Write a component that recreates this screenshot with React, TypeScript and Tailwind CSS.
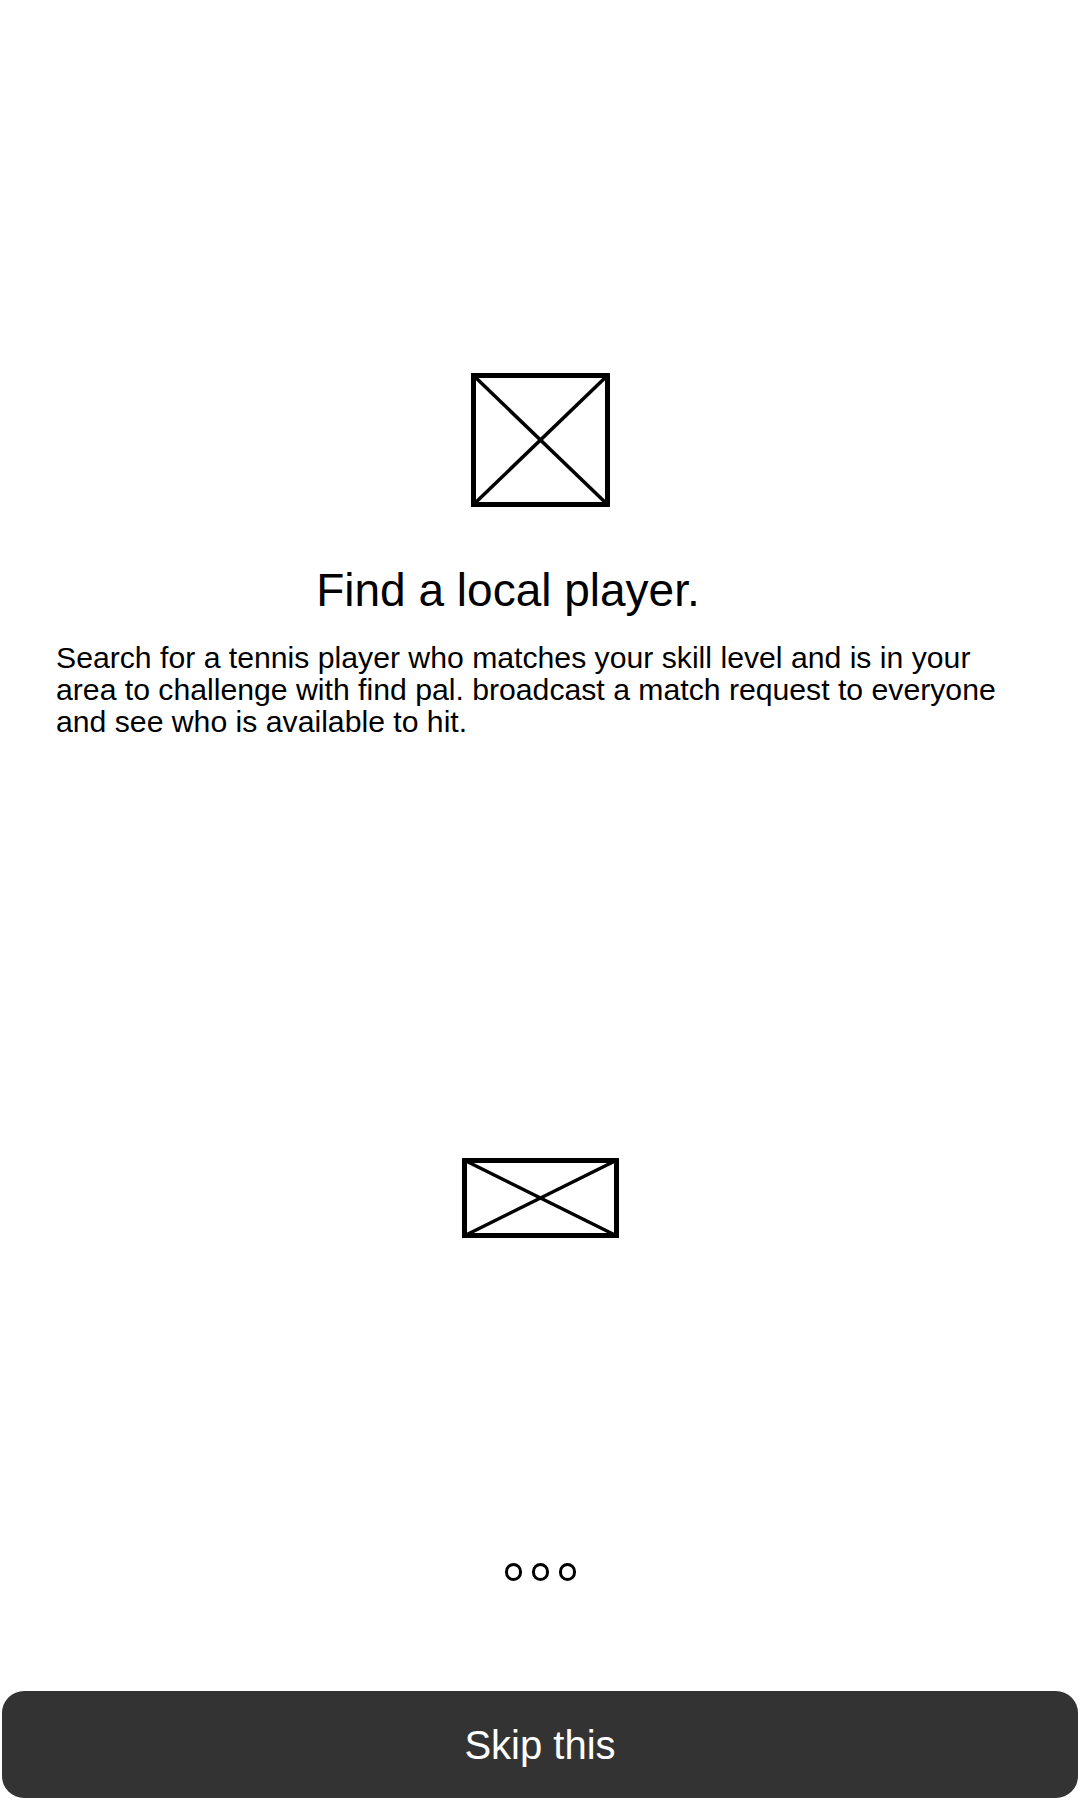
import React from "react";

function Placeholder({ w, h }: { w: number; h: number }) {
  // image placeholder: box with a cross
  return (
    <svg width={w} height={h} viewBox={`0 0 ${w} ${h}`} className="block">
      <rect x={2.5} y={2.5} width={w - 5} height={h - 5} fill="none" stroke="#000" strokeWidth={5} />
      <line x1={2} y1={2} x2={w - 2} y2={h - 2} stroke="#000" strokeWidth={3.5} />
      <line x1={w - 2} y1={2} x2={2} y2={h - 2} stroke="#000" strokeWidth={3.5} />
    </svg>
  );
}

export default function App() {
  return (
    <div className="flex min-h-[1800px] w-[1080px] flex-col bg-white font-['Liberation_Sans',Arial,sans-serif] text-black">
      <div className="mt-[373px] flex justify-center">
        <Placeholder w={139} h={134} />
      </div>

      <h1 className="mt-[57px] pr-[64px] text-center text-[46px] leading-[53px] font-normal">
        Find a local player.
      </h1>

      <p className="mt-[25px] px-[56px] text-[30.2px] leading-[32px]">
        Search for a tennis player who matches your skill level and is in your area to challenge with find pal.
        broadcast a match request to everyone and see who is available to hit.
      </p>

      <div className="mt-[420px] flex justify-center">
        <Placeholder w={157} h={80} />
      </div>

      <div className="mt-[325px] flex justify-center gap-[10px]">
        <span className="h-[18px] w-[17px] rounded-full border-[3px] border-black" />
        <span className="h-[18px] w-[17px] rounded-full border-[3px] border-black" />
        <span className="h-[18px] w-[17px] rounded-full border-[3px] border-black" />
      </div>

      <button className="mx-[2px] mt-[110px] mb-[2px] flex h-[107px] items-center justify-center rounded-[22px] bg-[#333333] text-[40px] text-white">
        Skip this
      </button>
    </div>
  );
}
